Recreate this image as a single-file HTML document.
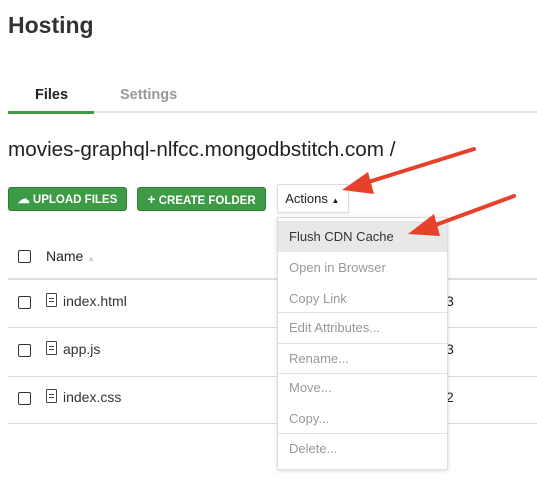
<html><head><style>
body{margin:0;width:537px;height:500px;background:#fff;font-family:"Liberation Sans",sans-serif;position:relative;overflow:hidden;color:#222}
.a{position:absolute;white-space:nowrap}
.btn{position:absolute;background:#3d9a45;border:1px solid #2f7d36;border-radius:3px;color:#fff;font-weight:bold;font-size:11.5px;height:22px;line-height:22px;text-align:center}
.cb{position:absolute;width:11px;height:11px;border:1.5px solid #333;border-radius:2px;left:18px}
.hl{position:absolute;left:8px;right:0;height:1px;background:#ddd}
.mi{position:absolute;left:11px;font-size:13px;color:#999}
.ms{position:absolute;left:0;right:0;height:1px;background:#e2e2e2}
.fi{position:absolute;left:46px;width:9px;height:12px;border:1.3px solid #444;border-radius:1px}
.fi:after{content:"";position:absolute;left:2px;top:4px;width:5px;height:1px;background:#444;box-shadow:0 3px 0 #444}
</style></head><body>
<div class="a" style="left:8px;top:12px;font-size:23px;font-weight:bold;color:#333">Hosting</div>
<div class="a" style="left:35px;top:87px;font-size:14.5px;font-weight:bold;color:#222">Files</div>
<div class="a" style="left:120px;top:87px;font-size:14.5px;font-weight:bold;color:#999">Settings</div>
<div class="a" style="left:8px;top:111px;width:529px;height:2px;background:#e6e6e6"></div>
<div class="a" style="left:8px;top:111px;width:86px;height:3px;background:#3d9a45"></div>
<div class="a" style="left:8px;top:138px;font-size:20.7px;color:#222">movies-graphql-nlfcc.mongodbstitch.com /</div>
<div class="btn" style="left:8px;top:187px;width:117px"><span style="font-size:12px">☁</span> UPLOAD FILES</div>
<div class="btn" style="left:137px;top:187px;width:127px"><span style="font-size:14px">+</span> CREATE FOLDER</div>
<div class="a" style="left:277px;top:184px;width:70px;height:27px;border:1px solid #ddd;border-radius:2px;font-size:13px;line-height:27px;box-shadow:0 1px 2px rgba(0,0,0,.1)">&nbsp;&nbsp;Actions <span style="font-size:8px">▲</span></div>
<div class="cb" style="top:250px"></div>
<div class="a" style="left:46px;top:248px;font-size:14px">Name <span style="font-size:8px;color:#ccc">▲</span></div>
<div class="hl" style="top:278px;height:2px"></div>
<div class="cb" style="top:296px"></div><div class="fi" style="top:293px"></div><div class="a" style="left:63px;top:293px;font-size:14px;color:#333">index.html</div>
<div class="hl" style="top:327px"></div>
<div class="cb" style="top:344px"></div><div class="fi" style="top:341px"></div><div class="a" style="left:63px;top:341px;font-size:14px;color:#333">app.js</div>
<div class="hl" style="top:376px"></div>
<div class="cb" style="top:392px"></div><div class="fi" style="top:389px"></div><div class="a" style="left:63px;top:389px;font-size:14px;color:#333">index.css</div>
<div class="hl" style="top:423px"></div>
<div class="a" style="left:446px;top:293px;font-size:14px">3</div>
<div class="a" style="left:446px;top:341px;font-size:14px">3</div>
<div class="a" style="left:446px;top:389px;font-size:14px">2</div>
<div class="a" style="left:277px;top:217px;width:169px;height:251px;background:#fff;border:1px solid #ddd;box-shadow:0 1px 4px rgba(0,0,0,.15)">
<div style="position:absolute;left:0;right:0;top:3px;height:31px;background:#e8e8e8"></div>
<div class="mi" style="top:11px;color:#333">Flush CDN Cache</div>
<div class="mi" style="top:42px">Open in Browser</div>
<div class="mi" style="top:73px">Copy Link</div>
<div class="ms" style="top:94px"></div>
<div class="mi" style="top:102px">Edit Attributes...</div>
<div class="ms" style="top:125px"></div>
<div class="mi" style="top:133px">Rename...</div>
<div class="ms" style="top:155px"></div>
<div class="mi" style="top:162px">Move...</div>
<div class="mi" style="top:193px">Copy...</div>
<div class="ms" style="top:215px"></div>
<div class="mi" style="top:223px">Delete...</div>
</div>
<svg class="a" style="left:0;top:0" width="537" height="500">
<g stroke="#e8412b" stroke-width="4" stroke-linecap="round"><line x1="474" y1="149" x2="362" y2="184"/><line x1="514" y1="196" x2="430" y2="227"/></g>
<polygon fill="#e8412b" points="342,190 368,172 374,194"/>
<polygon fill="#e8412b" points="408,234 434,214 440,236"/>
</svg>
</body></html>
